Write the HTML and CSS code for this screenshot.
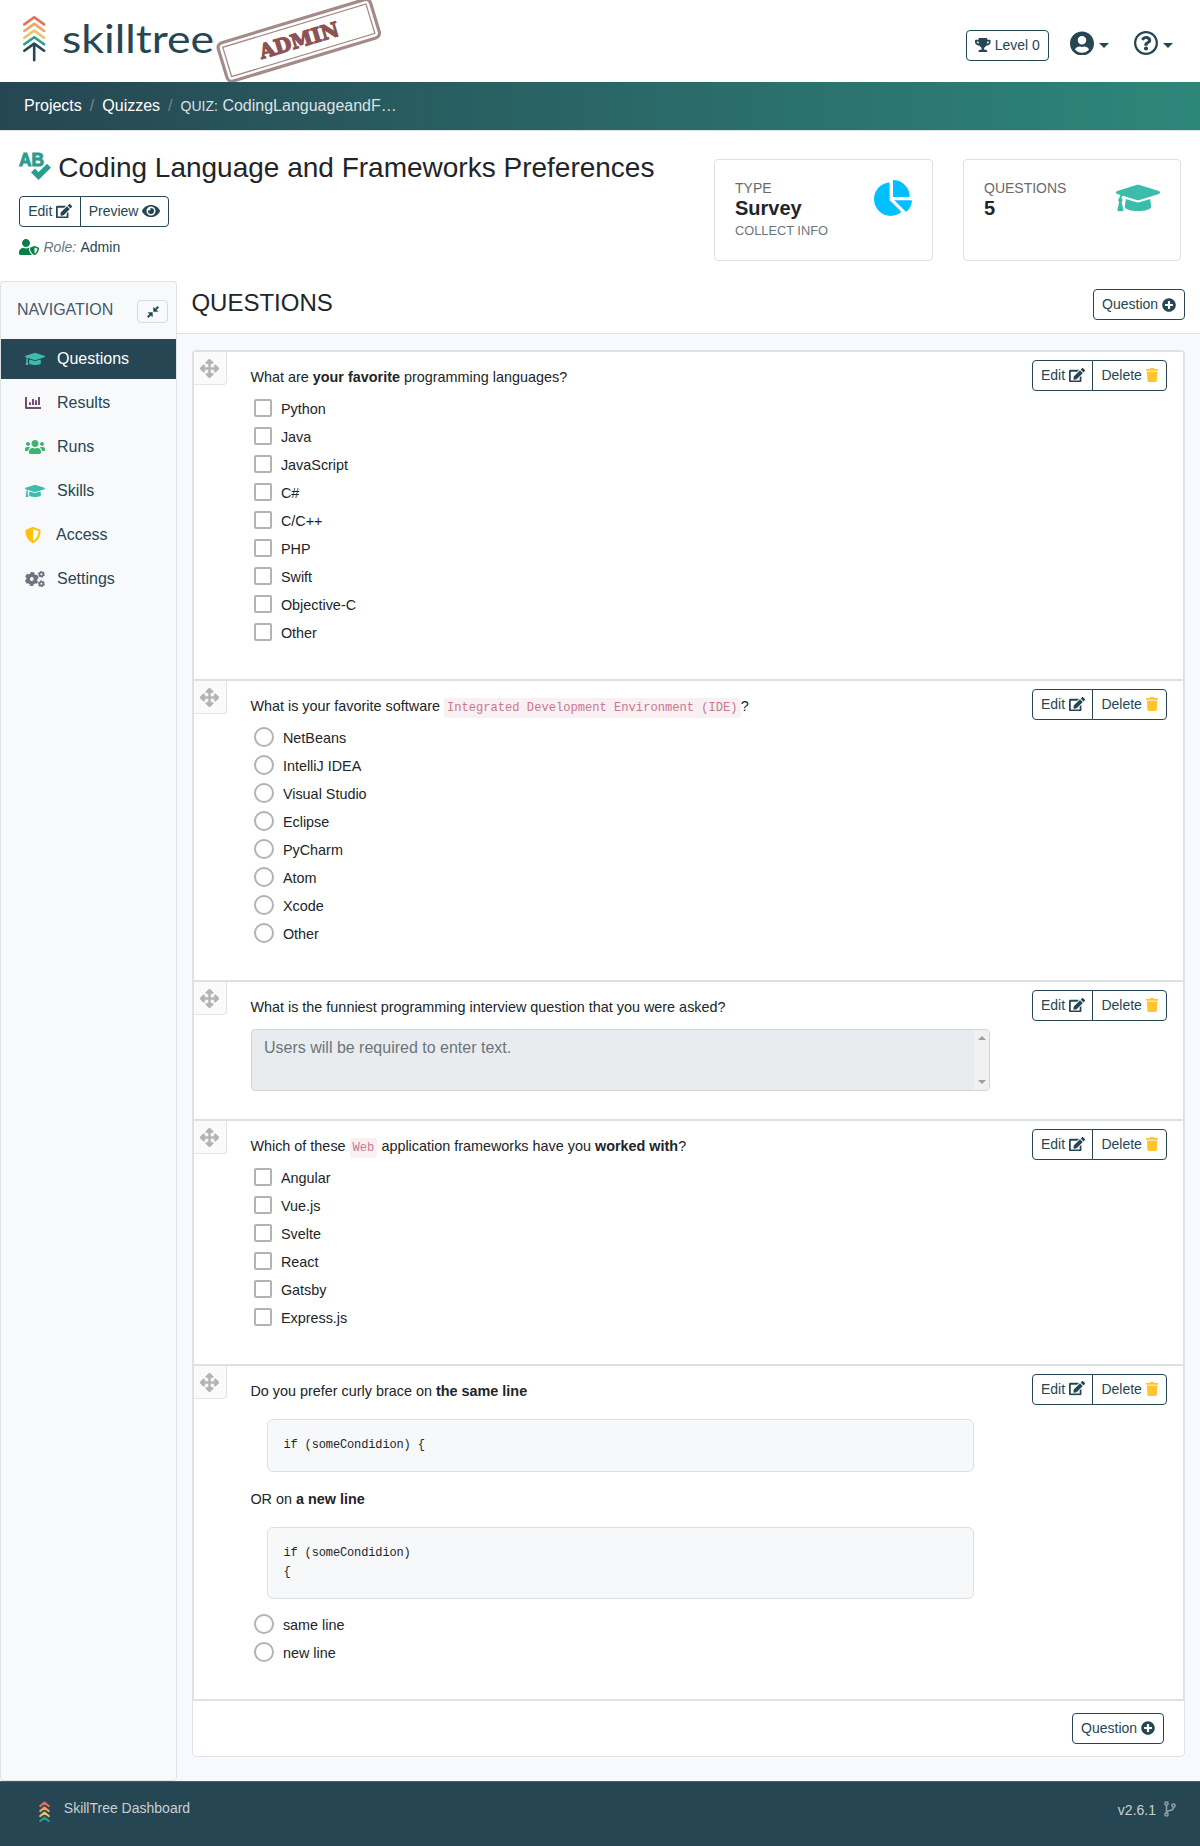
FILE: index.html
```html
<!DOCTYPE html>
<html lang="en">
<head>
<meta charset="utf-8">
<title>SkillTree Dashboard</title>
<link rel="stylesheet" href="styles.css">
</head>
<body>
<svg width="0" height="0" class="sprite" aria-hidden="true">
  <symbol id="cap" viewBox="0 0 640 512"><path d="M622.34 153.2L343.4 67.5c-15.2-4.67-31.6-4.67-46.79 0L17.66 153.2c-23.54 7.23-23.54 38.36 0 45.59l48.63 14.94c-10.67 13.19-17.23 29.28-17.88 46.9C38.78 266.15 32 276.11 32 288c0 10.78 5.68 19.85 13.86 25.65L20.33 428.53C18.11 438.52 25.71 448 35.94 448h56.11c10.24 0 17.84-9.48 15.62-19.47L82.14 313.65C90.32 307.85 96 298.78 96 288c0-11.57-6.47-21.25-15.66-26.87.76-15.02 8.44-28.3 20.69-36.72L296.6 284.5c9.06 2.78 26.44 6.25 46.79 0l278.95-85.7c23.55-7.24 23.55-38.36 0-45.6zM352.79 315.09c-28.53 8.76-52.84 3.92-65.59 0l-145.02-44.55L128 384c0 35.35 85.96 64 192 64s192-28.65 192-64l-14.18-113.47-145.03 44.56z"/></symbol>
  <symbol id="edit" viewBox="0 0 576 512"><path d="M402.6 83.2l90.2 90.2c3.8 3.8 3.8 10 0 13.8L274.4 405.6l-92.8 10.3c-12.4 1.4-22.9-9.1-21.5-21.5l10.3-92.8L388.8 83.2c3.8-3.8 10-3.8 13.8 0zm162-22.9l-48.8-48.8c-15.2-15.2-39.9-15.2-55.2 0l-35.4 35.4c-3.8 3.8-3.8 10 0 13.8l90.2 90.2c3.8 3.8 10 3.8 13.8 0l35.4-35.4c15.2-15.3 15.2-40 0-55.2zM384 346.2V448H64V128h229.8c3.2 0 6.2-1.3 8.5-3.5l40-40c7.6-7.6 2.2-20.5-8.5-20.5H48C21.5 64 0 85.5 0 112v352c0 26.5 21.5 48 48 48h352c26.5 0 48-21.5 48-48V306.2c0-10.7-12.9-16-20.5-8.5l-40 40c-2.2 2.3-3.5 5.3-3.5 8.5z"/></symbol>
  <symbol id="eye" viewBox="0 0 576 512"><path d="M572.52 241.4C518.29 135.59 410.93 64 288 64S57.68 135.64 3.48 241.41a32.35 32.35 0 0 0 0 29.19C57.71 376.41 165.07 448 288 448s230.32-71.64 284.52-177.41a32.35 32.35 0 0 0 0-29.19zM288 400a144 144 0 1 1 144-144 143.93 143.93 0 0 1-144 144zm0-240a95.31 95.31 0 0 0-25.31 3.79 47.85 47.85 0 0 1-66.9 66.9A95.78 95.78 0 1 0 288 160z"/></symbol>
  <symbol id="trash" viewBox="0 0 448 512"><path d="M432 32H312l-9.4-18.7A24 24 0 0 0 281.1 0H166.8a23.72 23.72 0 0 0-21.4 13.3L136 32H16A16 16 0 0 0 0 48v32a16 16 0 0 0 16 16h416a16 16 0 0 0 16-16V48a16 16 0 0 0-16-16zM53.2 467a48 48 0 0 0 47.9 45h245.8a48 48 0 0 0 47.9-45L416 128H32z"/></symbol>
  <symbol id="plus" viewBox="0 0 512 512"><path d="M256 8C119 8 8 119 8 256s111 248 248 248 248-111 248-248S393 8 256 8zm144 276c0 6.6-5.4 12-12 12h-92v92c0 6.6-5.4 12-12 12h-56c-6.6 0-12-5.4-12-12v-92h-92c-6.6 0-12-5.4-12-12v-56c0-6.6 5.4-12 12-12h92v-92c0-6.6 5.4-12 12-12h56c6.6 0 12 5.4 12 12v92h92c6.6 0 12 5.4 12 12v56z"/></symbol>
  <symbol id="user" viewBox="0 0 496 512"><path d="M248 8C111 8 0 119 0 256s111 248 248 248 248-111 248-248S385 8 248 8zm0 96c48.6 0 88 39.4 88 88s-39.4 88-88 88-88-39.4-88-88 39.4-88 88-88zm0 344c-58.7 0-111.3-26.6-146.5-68.2 18.8-35.4 55.6-59.8 98.5-59.8 2.4 0 4.8.4 7.1 1.1 13 4.2 26.6 6.9 40.9 6.9 14.3 0 28-2.7 40.9-6.9 2.3-.7 4.7-1.1 7.1-1.1 42.9 0 79.7 24.4 98.5 59.8C359.3 421.4 306.7 448 248 448z"/></symbol>
  <symbol id="help" viewBox="8 8 496 496"><path d="M256 8C119.043 8 8 119.083 8 256c0 136.997 111.043 248 248 248s248-111.003 248-248C504 119.083 392.957 8 256 8zm0 448c-110.532 0-200-89.431-200-200 0-110.495 89.472-200 200-200 110.491 0 200 89.471 200 200 0 110.53-89.431 200-200 200zm107.244-255.2c0 67.052-72.421 68.084-72.421 92.863V300c0 6.627-5.373 12-12 12h-45.647c-6.627 0-12-5.373-12-12v-8.659c0-35.745 27.1-50.034 47.579-61.516 17.561-9.845 28.324-16.541 28.324-29.579 0-17.246-21.999-28.693-39.784-28.693-23.189 0-33.894 10.977-48.942 29.969-4.057 5.12-11.46 6.071-16.666 2.124l-27.824-21.098c-5.107-3.872-6.251-11.066-2.644-16.363C184.846 131.491 214.94 112 261.794 112c49.071 0 101.45 38.304 101.45 88.8zM298 368c0 23.159-18.841 42-42 42s-42-18.841-42-42 18.841-42 42-42 42 18.841 42 42z"/></symbol>
  <symbol id="trophy" viewBox="0 0 576 512"><path d="M552 64H448V24c0-13.3-10.7-24-24-24H152c-13.3 0-24 10.7-24 24v40H24C10.7 64 0 74.7 0 88v56c0 35.7 22.5 72.4 61.9 100.7 31.5 22.7 69.8 37.1 110 41.7C203.3 338.5 240 360 240 360v72h-48c-35.3 0-64 20.7-64 56v12c0 6.6 5.4 12 12 12h296c6.6 0 12-5.4 12-12v-12c0-35.3-28.7-56-64-56h-48v-72s36.7-21.5 68.1-73.6c40.3-4.6 78.6-19 110-41.7 39.3-28.3 61.9-65 61.9-100.7V88c0-13.3-10.7-24-24-24zM99.3 192.8C74.9 175.2 64 155.6 64 144v-16h64.2c1 32.6 5.8 61.2 12.8 86.2-15.1-5.2-29.2-12.4-41.7-21.4zM512 144c0 16.1-17.7 36.1-35.3 48.8-12.5 9-26.7 16.2-41.8 21.4 7-25 11.8-53.6 12.8-86.2H512v16z"/></symbol>
  <symbol id="pie" viewBox="0 0 544 512"><path d="M527.79 288H290.5l158.03 158.03c6.04 6.04 15.98 6.53 22.19.68 38.7-36.46 65.32-85.61 73.13-140.86 1.34-9.46-6.51-17.85-16.06-17.85zm-15.83-64.8C503.72 103.74 408.26 8.28 288.8.04 279.68-.59 272 7.1 272 16.24V240h223.77c9.14 0 16.82-7.68 16.19-16.8zM224 288V50.71c0-9.55-8.39-17.4-17.84-16.06C86.99 51.49-4.1 155.6.14 280.37 4.5 408.51 114.83 513.59 243.03 511.98c50.4-.63 96.97-16.87 135.26-44.03 7.9-5.6 8.42-17.23 1.57-24.08L224 288z"/></symbol>
  <symbol id="move" viewBox="0 0 512 512"><path stroke="currentColor" stroke-width="12" d="M352.201 425.775l-79.196 79.196c-9.373 9.373-24.568 9.373-33.941 0l-79.196-79.196c-15.119-15.119-4.411-40.971 16.971-40.97h51.162L228 284H127.196v51.162c0 21.382-25.851 32.09-40.971 16.971L7.029 272.937c-9.373-9.373-9.373-24.569 0-33.941L86.225 159.8c15.119-15.119 40.971-4.411 40.971 16.971V228H228V127.196h-51.23c-21.382 0-32.09-25.851-16.971-40.971l79.196-79.196c9.373-9.373 24.568-9.373 33.941 0l79.196 79.196c15.119 15.119 4.411 40.971-16.971 40.971h-51.162V228h100.804v-51.162c0-21.382 25.851-32.09 40.97-16.971l79.196 79.196c9.373 9.373 9.373 24.569 0 33.941L425.773 352.2c-15.119 15.119-40.971 4.411-40.97-16.971V284H284v100.804h51.23c21.382 0 32.09 25.851 16.971 40.971z"/></symbol>
  <symbol id="users" viewBox="0 0 640 512"><path d="M96 224c35.3 0 64-28.7 64-64s-28.7-64-64-64-64 28.7-64 64 28.7 64 64 64zm448 0c35.3 0 64-28.7 64-64s-28.7-64-64-64-64 28.7-64 64 28.7 64 64 64zm32 32h-64c-17.6 0-33.5 7.1-45.1 18.6 40.3 22.1 68.9 62 75.1 109.4h66c17.7 0 32-14.3 32-32v-32c0-35.3-28.7-64-64-64zm-256 0c61.9 0 112-50.1 112-112S381.9 32 320 32 208 82.1 208 144s50.1 112 112 112zm76.8 32h-8.3c-20.8 10-43.9 16-68.5 16s-47.6-6-68.5-16h-8.3C179.6 288 128 339.6 128 403.2V432c0 26.5 21.5 48 48 48h288c26.5 0 48-21.5 48-48v-28.8c0-63.6-51.6-115.2-115.2-115.2zm-223.7-13.4C161.5 263.1 145.6 256 128 256H64c-35.3 0-64 28.7-64 64v32c0 17.7 14.3 32 32 32h65.9c6.3-47.4 34.9-87.3 75.2-109.4z"/></symbol>
  <symbol id="shield" viewBox="0 0 512 512"><path d="M466.5 83.7l-192-80a48.15 48.15 0 0 0-36.9 0l-192 80C27.7 91.1 16 108.6 16 128c0 198.5 114.5 335.7 221.5 380.3 11.8 4.9 25.1 4.9 36.9 0C360.1 472.6 496 349.3 496 128c0-19.4-11.7-36.9-29.5-44.3zM256.1 446.3l-.1-381 175.9 73.3c-3.3 151.4-82.1 261.1-175.8 307.7z"/></symbol>
  <symbol id="usershield" viewBox="0 0 640 512"><path d="M622.3 271.1l-115.2-45c-4.1-1.6-12.6-3.7-22.2 0l-115.2 45c-10.7 4.2-17.7 14-17.7 24.9 0 111.6 68.7 188.8 132.9 213.9 9.6 3.7 18 1.6 22.2 0C558.4 489.9 640 420.5 640 296c0-10.9-7-20.7-17.7-24.9zM496 462.4V273.3l95.5 37.3c-5.6 87.1-60.9 135.4-95.5 151.8zM224 256c70.7 0 128-57.3 128-128S294.7 0 224 0 96 57.3 96 128s57.3 128 128 128zm96 40c0-2.5.8-4.8 1.1-7.2-2.5-.1-4.9-.8-7.5-.8h-16.7c-22.2 10.2-46.9 16-72.9 16s-50.6-5.8-72.9-16h-16.7C60.2 288 0 348.2 0 422.4V464c0 26.5 21.5 48 48 48h352c6.8 0 13.3-1.5 19.2-4-54-42.9-99.2-116.7-99.2-212z"/></symbol>
  <symbol id="chart" viewBox="0 0 16 16"><path d="M0 2h2v10h14v2H1a1 1 0 0 1-1-1zM4 7.2h2V10H4zM7 4h2v6H7zM10 5.2h2V10h-2zM13 2h2v8h-2z"/></symbol>
  <symbol id="cogs" viewBox="0 0 20 16">
    <g fill="none" stroke="currentColor"><circle cx="6.8" cy="8" r="3.8" stroke-width="3.8"/><circle cx="6.8" cy="8" r="5.8" stroke-width="2.2" stroke-dasharray="3.6 2.474" stroke-dashoffset="1.8" transform="rotate(30 6.8 8)"/>
    <circle cx="16.4" cy="3.2" r="1.9" stroke-width="1.8"/><circle cx="16.4" cy="3.2" r="2.9" stroke-width="1.1" stroke-dasharray="1.7 1.337"/>
    <circle cx="16.4" cy="12.8" r="1.9" stroke-width="1.8"/><circle cx="16.4" cy="12.8" r="2.9" stroke-width="1.1" stroke-dasharray="1.7 1.337"/></g></symbol>
  <symbol id="compress" viewBox="0 0 12 12"><path stroke="currentColor" stroke-width=".5" stroke-linejoin="round" d="M6.6 1.2v4.2h4.2L9.3 3.9 11.8 1.4 10.6.2 8.1 2.7zM5.4 10.8V6.6H1.2l1.5 1.5L.2 10.6l1.2 1.2 2.5-2.5z"/></symbol>
  <symbol id="branch" viewBox="0 0 12 16"><g fill="none" stroke="currentColor" stroke-width="1.5"><circle cx="2.5" cy="2.5" r="1.6"/><circle cx="2.5" cy="13.5" r="1.6"/><circle cx="9.5" cy="4.5" r="1.6"/><path d="M2.5 4v8M9.5 6v.8c0 3.4-5.5 2-6.8 4.2"/></g></symbol>
</svg>

<header class="top">
  <svg class="logo" width="196" height="60" viewBox="0 0 196 60">
    <g fill="none" stroke-width="2.6" stroke-linecap="round" stroke-linejoin="round">
      <path stroke="#e76f51" d="M1.3 13.4 11.2 6.3l9.9 7.1"/><path stroke="#f4a261" d="M1.3 20 11.2 12.9l9.9 7.1"/><path stroke="#e9c46a" d="M1.3 26.7 11.2 19.6l9.9 7.1"/><path stroke="#2a9d8f" d="M1.3 33.3 11.2 26.2l9.9 7.1"/><path stroke="#264653" d="M1.3 39.7 11.2 32.6l9.9 7.1M11.2 33v16.3"/>
    </g>
    <text class="wordmark" x="39" y="42" textLength="152" lengthAdjust="spacingAndGlyphs">skilltree</text>
  </svg>
  <svg class="stamp" width="166" height="82" viewBox="216 0 166 82">
    <g transform="rotate(-16.8 298.8 40.3)">
      <rect x="219.3" y="20.3" width="159" height="40" rx="5" fill="none" stroke="#a58a8a" stroke-width="3.2"/>
      <rect x="224" y="25" width="149.6" height="30.6" fill="none" stroke="#a58a8a" stroke-width="1.3"/>
      <text class="stamp-text" x="258" y="47.5" textLength="82" lengthAdjust="spacingAndGlyphs">ADMIN</text>
    </g>
  </svg>
  <div class="top-tools">
    <button class="btn"><svg class="i w18"><use href="#trophy"/></svg> Level 0</button>
    <span class="menu menu-user"><svg><use href="#user"/></svg><i></i></span>
    <span class="menu"><svg><use href="#help"/></svg><i></i></span>
  </div>
</header>
<nav class="crumbs"><a>Projects</a><s>/</s><a>Quizzes</a><s>/</s><span><small>QUIZ:</small> CodingLanguageandF…</span></nav>

<section class="page-head">
  <div class="page-title">
    <h1><svg width="32" height="28" viewBox="0 0 32 28"><text class="ab" x="0" y="13.5" textLength="25" lengthAdjust="spacingAndGlyphs">AB</text><path d="M14 18.6 19.5 24 30 13.8" fill="none" stroke="#2a9d8f" stroke-width="5.6" stroke-linejoin="miter"/></svg>Coding Language and Frameworks Preferences</h1>
    <div class="group"><button class="btn">Edit <svg class="i w18"><use href="#edit"/></svg></button><button class="btn preview">Preview <svg class="i eye"><use href="#eye"/></svg></button></div>
    <div class="role"><svg><use href="#usershield"/></svg><em>Role:</em><span>Admin</span></div>
  </div>
  <div class="stat"><div><h5>TYPE</h5><strong>Survey</strong><small>COLLECT INFO</small></div><svg class="pie"><use href="#pie"/></svg></div>
  <div class="stat stat-last"><div><h5>QUESTIONS</h5><strong>5</strong></div><svg class="bigcap"><use href="#cap"/></svg></div>
</section>

<div class="main">
  <aside class="side">
    <div class="side-head"><span>NAVIGATION</span><button><svg><use href="#compress"/></svg></button></div>
    <ul>
      <li class="active"><svg class="c-cap"><use href="#cap"/></svg>Questions</li>
      <li><svg class="c-chart"><use href="#chart"/></svg>Results</li>
      <li><svg class="c-users"><use href="#users"/></svg>Runs</li>
      <li><svg class="c-cap"><use href="#cap"/></svg>Skills</li>
      <li><svg class="c-shield"><use href="#shield"/></svg>Access</li>
      <li><svg class="c-cogs"><use href="#cogs"/></svg>Settings</li>
    </ul>
  </aside>
  <main class="content">
    <div class="content-head"><h2>QUESTIONS</h2><button class="btn">Question <svg class="i w14"><use href="#plus"/></svg></button></div>
    <div class="card">
      <article class="q">
        <div class="handle"><svg><use href="#move"/></svg></div>
        <div class="body"><p>What are <b>your favorite</b> programming languages?</p>
          <ul class="opts check"><li>Python</li><li>Java</li><li>JavaScript</li><li>C#</li><li>C/C++</li><li>PHP</li><li>Swift</li><li>Objective-C</li><li>Other</li></ul></div>
        <div class="group"><button class="btn">Edit <svg class="i w18"><use href="#edit"/></svg></button><button class="btn">Delete <svg class="i trash"><use href="#trash"/></svg></button></div>
      </article>
      <article class="q">
        <div class="handle"><svg><use href="#move"/></svg></div>
        <div class="body"><p>What is your favorite software <code>Integrated Development Environment (IDE)</code>?</p>
          <ul class="opts radio"><li>NetBeans</li><li>IntelliJ IDEA</li><li>Visual Studio</li><li>Eclipse</li><li>PyCharm</li><li>Atom</li><li>Xcode</li><li>Other</li></ul></div>
        <div class="group"><button class="btn">Edit <svg class="i w18"><use href="#edit"/></svg></button><button class="btn">Delete <svg class="i trash"><use href="#trash"/></svg></button></div>
      </article>
      <article class="q">
        <div class="handle"><svg><use href="#move"/></svg></div>
        <div class="body"><p>What is the funniest programming interview question that you were asked?</p>
          <div class="answer"><span>Users will be required to enter text.</span><div class="scroll"><i class="up"></i><i class="down"></i></div></div></div>
        <div class="group"><button class="btn">Edit <svg class="i w18"><use href="#edit"/></svg></button><button class="btn">Delete <svg class="i trash"><use href="#trash"/></svg></button></div>
      </article>
      <article class="q">
        <div class="handle"><svg><use href="#move"/></svg></div>
        <div class="body"><p>Which of these <code>Web</code> application frameworks have you <b>worked with</b>?</p>
          <ul class="opts check"><li>Angular</li><li>Vue.js</li><li>Svelte</li><li>React</li><li>Gatsby</li><li>Express.js</li></ul></div>
        <div class="group"><button class="btn">Edit <svg class="i w18"><use href="#edit"/></svg></button><button class="btn">Delete <svg class="i trash"><use href="#trash"/></svg></button></div>
      </article>
      <article class="q">
        <div class="handle"><svg><use href="#move"/></svg></div>
        <div class="body"><p>Do you prefer curly brace on <b>the same line</b></p>
          <pre>if (someCondidion) {</pre>
          <p>OR on <b>a new line</b></p>
          <pre class="two">if (someCondidion)
{</pre>
          <ul class="opts radio after-code"><li>same line</li><li>new line</li></ul></div>
        <div class="group"><button class="btn">Edit <svg class="i w18"><use href="#edit"/></svg></button><button class="btn">Delete <svg class="i trash"><use href="#trash"/></svg></button></div>
      </article>
      <div class="card-foot"><button class="btn">Question <svg class="i w14"><use href="#plus"/></svg></button></div>
    </div>
  </main>
</div>

<footer class="foot">
  <svg class="foot-logo" width="11" height="22" viewBox="0 0 11 22"><g fill="none" stroke-width="2.2" stroke-linecap="round" stroke-linejoin="round"><path stroke="#e76f51" d="M1.3 5 5.5 1.6 9.7 5"/><path stroke="#f4a261" d="M1.3 10 5.5 6.6 9.7 10"/><path stroke="#e9c46a" d="M1.3 15 5.5 11.6 9.7 15"/><path stroke="#2a9d8f" d="M1.3 20 5.5 16.6 9.7 20"/></g></svg>
  <span>SkillTree Dashboard</span>
  <span class="version">v2.6.1</span><svg class="branch"><use href="#branch"/></svg>
</footer>
</body>
</html>
```
FILE: styles.css
```css
*, *::before { box-sizing: border-box; margin: 0; padding: 0; }
body { width: 1200px; background: #f8f9fe; color: #212529; font: 16px/24px "Liberation Sans", Arial, sans-serif; }
svg { fill: currentColor; flex: none; display: block; }
ul { list-style: none; }
.sprite { position: absolute; }

.btn { display: inline-flex; align-items: center; justify-content: center; white-space: pre; height: 31px; padding: 0 8px; border: 1px solid #264653; border-radius: 4px; background: #fff; color: #264653; font: 14px/21px "Liberation Sans", Arial, sans-serif; }
.btn .i { height: 14px; margin-bottom: 1.5px; }
.btn .w18 { width: 15.75px; }
.btn .w14 { width: 14px; margin-bottom: 0; }
.btn .eye { width: 18px; height: 16px; }
.btn .trash { width: 12.25px; color: #ffc42e; }
.group { display: flex; }
.group .btn { padding: 0; }
.group .btn:first-child { width: 61.6px; padding-left: .8px; border-radius: 4px 0 0 4px; }
.group .btn:last-child { width: 74.6px; border-radius: 0 4px 4px 0; margin-left: -1px; }
.group .btn.preview { width: 89.8px; }
.group .btn .w18 { width: 16px; height: 14.4px; }

.top { display: flex; height: 82px; background: #fff; overflow: hidden; }
.logo { margin: 11px 0 0 23px; overflow: visible; }
.wordmark { font: 39px Lato, sans-serif; fill: #264653; }
.stamp { margin-left: -3px; overflow: visible; }
.stamp-text { font: bold 20px "DejaVu Serif", serif; fill: #8f5252; stroke: #8f5252; stroke-width: 1.3px; }
.top-tools { display: flex; margin: 30px 27px 0 auto; }
.top-tools .btn { width: 83px; padding: 0; }
.menu { display: flex; color: #264653; margin: 1px 0 0 25px; gap: 5px; }
.menu-user { margin-left: 21px; }
.menu svg { width: 24px; height: 24px; }
.menu-user svg { height: 24.8px; margin-top: -.4px; }
.menu i { margin-top: 12px; height: 0; border: 5px solid transparent; border-top-color: #264653; border-bottom: 0; }

.crumbs { display: flex; height: 48px; padding-left: 24px; background: linear-gradient(to right, #264653, #2d8779); color: #fff; line-height: 47px; }
.crumbs s { text-decoration: none; color: #76878c; width: 20.5px; text-align: center; }
.crumbs span { color: #dee2e6; }
.crumbs small { font-size: 14px; }

.page-head { display: flex; height: 151px; border-top: 1px solid #dee2e6; background: #fff; }
.page-title { width: 714px; padding: 19px 0 0 19px; }
h1 { display: flex; height: 36px; font-size: 28px; font-weight: 400; line-height: 36px; gap: 7.3px; }
h1 svg { margin-top: 2px; overflow: visible; }
.ab { font: bold 18px "Liberation Sans", Arial, sans-serif; fill: #2a9d8f; stroke: #2a9d8f; stroke-width: 1px; }
.page-title .group { margin-top: 10px; }
.role { display: flex; align-items: center; height: 21px; margin-top: 10px; font-size: 14px; line-height: 21px; color: #264653; }
.role svg { width: 20px; height: 16px; color: #0a8048; margin: -2px 4.5px 0 0; }
.role em { color: #6c757d; margin-right: 4.3px; }
.stat { display: flex; justify-content: space-between; width: 219px; height: 102px; margin-top: 28px; padding: 20px; border: 1px solid #dfdfdf; border-radius: 4px; }
.stat-last { width: 218px; margin-left: 30px; }
.stat h5 { font-size: 14px; font-weight: 400; line-height: 17px; color: #6a6a6a; }
.stat strong { display: block; font-size: 20px; line-height: 24px; margin: -1px 0 2px; }
.stat small { display: block; font-size: 12.8px; line-height: 18px; color: #6c757d; }
.pie { width: 38px; height: 36px; color: #00c0ff; }
.bigcap { width: 44px; height: 36px; color: #3cbcac; }

.main { display: flex; height: 1500px; }
.side { width: 177px; border: 1px solid #dee2e6; border-radius: 4px; background: #f8f9fb; }
.side-head { display: flex; justify-content: space-between; height: 57px; padding: 18px 8px 0 16px; color: #42596e; }
.side-head span { line-height: 20px; }
.side-head button { display: flex; align-items: center; justify-content: center; width: 31px; height: 23px; border: 1px solid #d6dade; border-radius: 4px; background: #f8f9fa; color: #264653; }
.side-head svg { width: 12px; height: 12px; }
.side li { display: flex; align-items: center; gap: 12px; height: 40px; margin-bottom: 4px; padding-left: 24px; color: #264653; line-height: 38px; }
.side li svg { width: 20px; height: 16px; }
.side .active { background: #264653; color: #fff; }
.c-cap { color: #3cbcac; }
.c-users { color: #3cb371; }
.side li .c-chart { width: 16px; margin-right: 4px; color: #73506f; }
.side li .c-shield { width: 16px; margin-right: 3px; color: #ffc107; }
.c-cogs { color: #6c757d; }

.content { flex: 1; }
.content-head { display: flex; justify-content: space-between; height: 53px; padding: 8px 15px 0 14.4px; background: #fff; border-bottom: 1px solid #dee2e6; }
h2 { font-size: 24px; font-weight: 400; line-height: 28px; }
.card { margin: 16px 15px 0; border: 1px solid #dee2e6; border-radius: 4px; background: #fff; }
.q { display: flex; align-items: flex-start; border: 1px solid #dee0e3; }
.handle { width: 33px; height: 33px; padding: 7px 0 0 6px; border: solid #e2e4e6; border-width: 0 1px 1px 0; border-radius: 0 0 4px 0; background: #fafafa; color: #b3b3b3; }
.handle svg { width: 19px; height: 19px; }
.body { width: 740px; margin-left: 23.4px; padding: 15.4px 0 33px; font-size: 14.4px; line-height: 21.6px; }
.q > .group { margin: 8px 16px 0 auto; }
code { padding: 3px; border-radius: 3px; background: #f8f0f3; color: #c97790; font: 12.12px/12px "Liberation Mono", monospace; }
.opts { margin-top: 5px; }
.opts li { display: flex; align-items: center; height: 28px; padding: 3.4px 0 0 4px; }
.opts li::before { content: ""; flex: none; margin: -3.4px 8.5px 0 0; border: 2px solid #b3b3b3; }
.check li::before { width: 18px; height: 18px; border-radius: 2px; }
.radio li::before { width: 20px; height: 20px; border-radius: 50%; }
.answer { display: flex; justify-content: space-between; height: 62px; margin: 10px 0 -5px .6px; border: 1px solid #ced4da; border-radius: 4px; background: #e9ecef; color: #6c757d; font-size: 16px; line-height: 24px; overflow: hidden; }
.answer span { padding: 6px 12px; }
.scroll { display: flex; flex-direction: column; justify-content: space-between; align-items: center; width: 15px; padding: 6px 0; background: #f1f1f1; }
.scroll i { border: 4px solid transparent; }
.scroll .up { border-top: 0; border-bottom-color: #a0a0a0; }
.scroll .down { border-bottom: 0; border-top-color: #a0a0a0; }
pre { height: 53px; margin: 16px 16.5px 17.4px; padding: 16px 15.5px; border: 1px solid #dcdfe2; border-radius: 6px; background: #f6f8fa; font: 12px/19.5px "Liberation Mono", monospace; letter-spacing: -.13px; }
pre.two { height: 72px; margin-bottom: 0; }
.after-code { margin-top: 11px; }
.card-foot { display: flex; justify-content: flex-end; height: 56px; padding: 12px 20px 0 0; border-top: 1px solid #dee2e6; }

.foot { display: flex; height: 65px; border-top: 1px solid #1f7271; background: #264653; color: #c9cfd2; font-size: 14px; line-height: 21px; padding: 16px 24px 0 38.5px; }
.foot-logo { margin: 3px 14.3px 0 0; }
.version { margin: 2px 8px 0 auto; }
.foot .branch { width: 12px; height: 16px; margin-top: 3px; color: #93a3a9; }
```
